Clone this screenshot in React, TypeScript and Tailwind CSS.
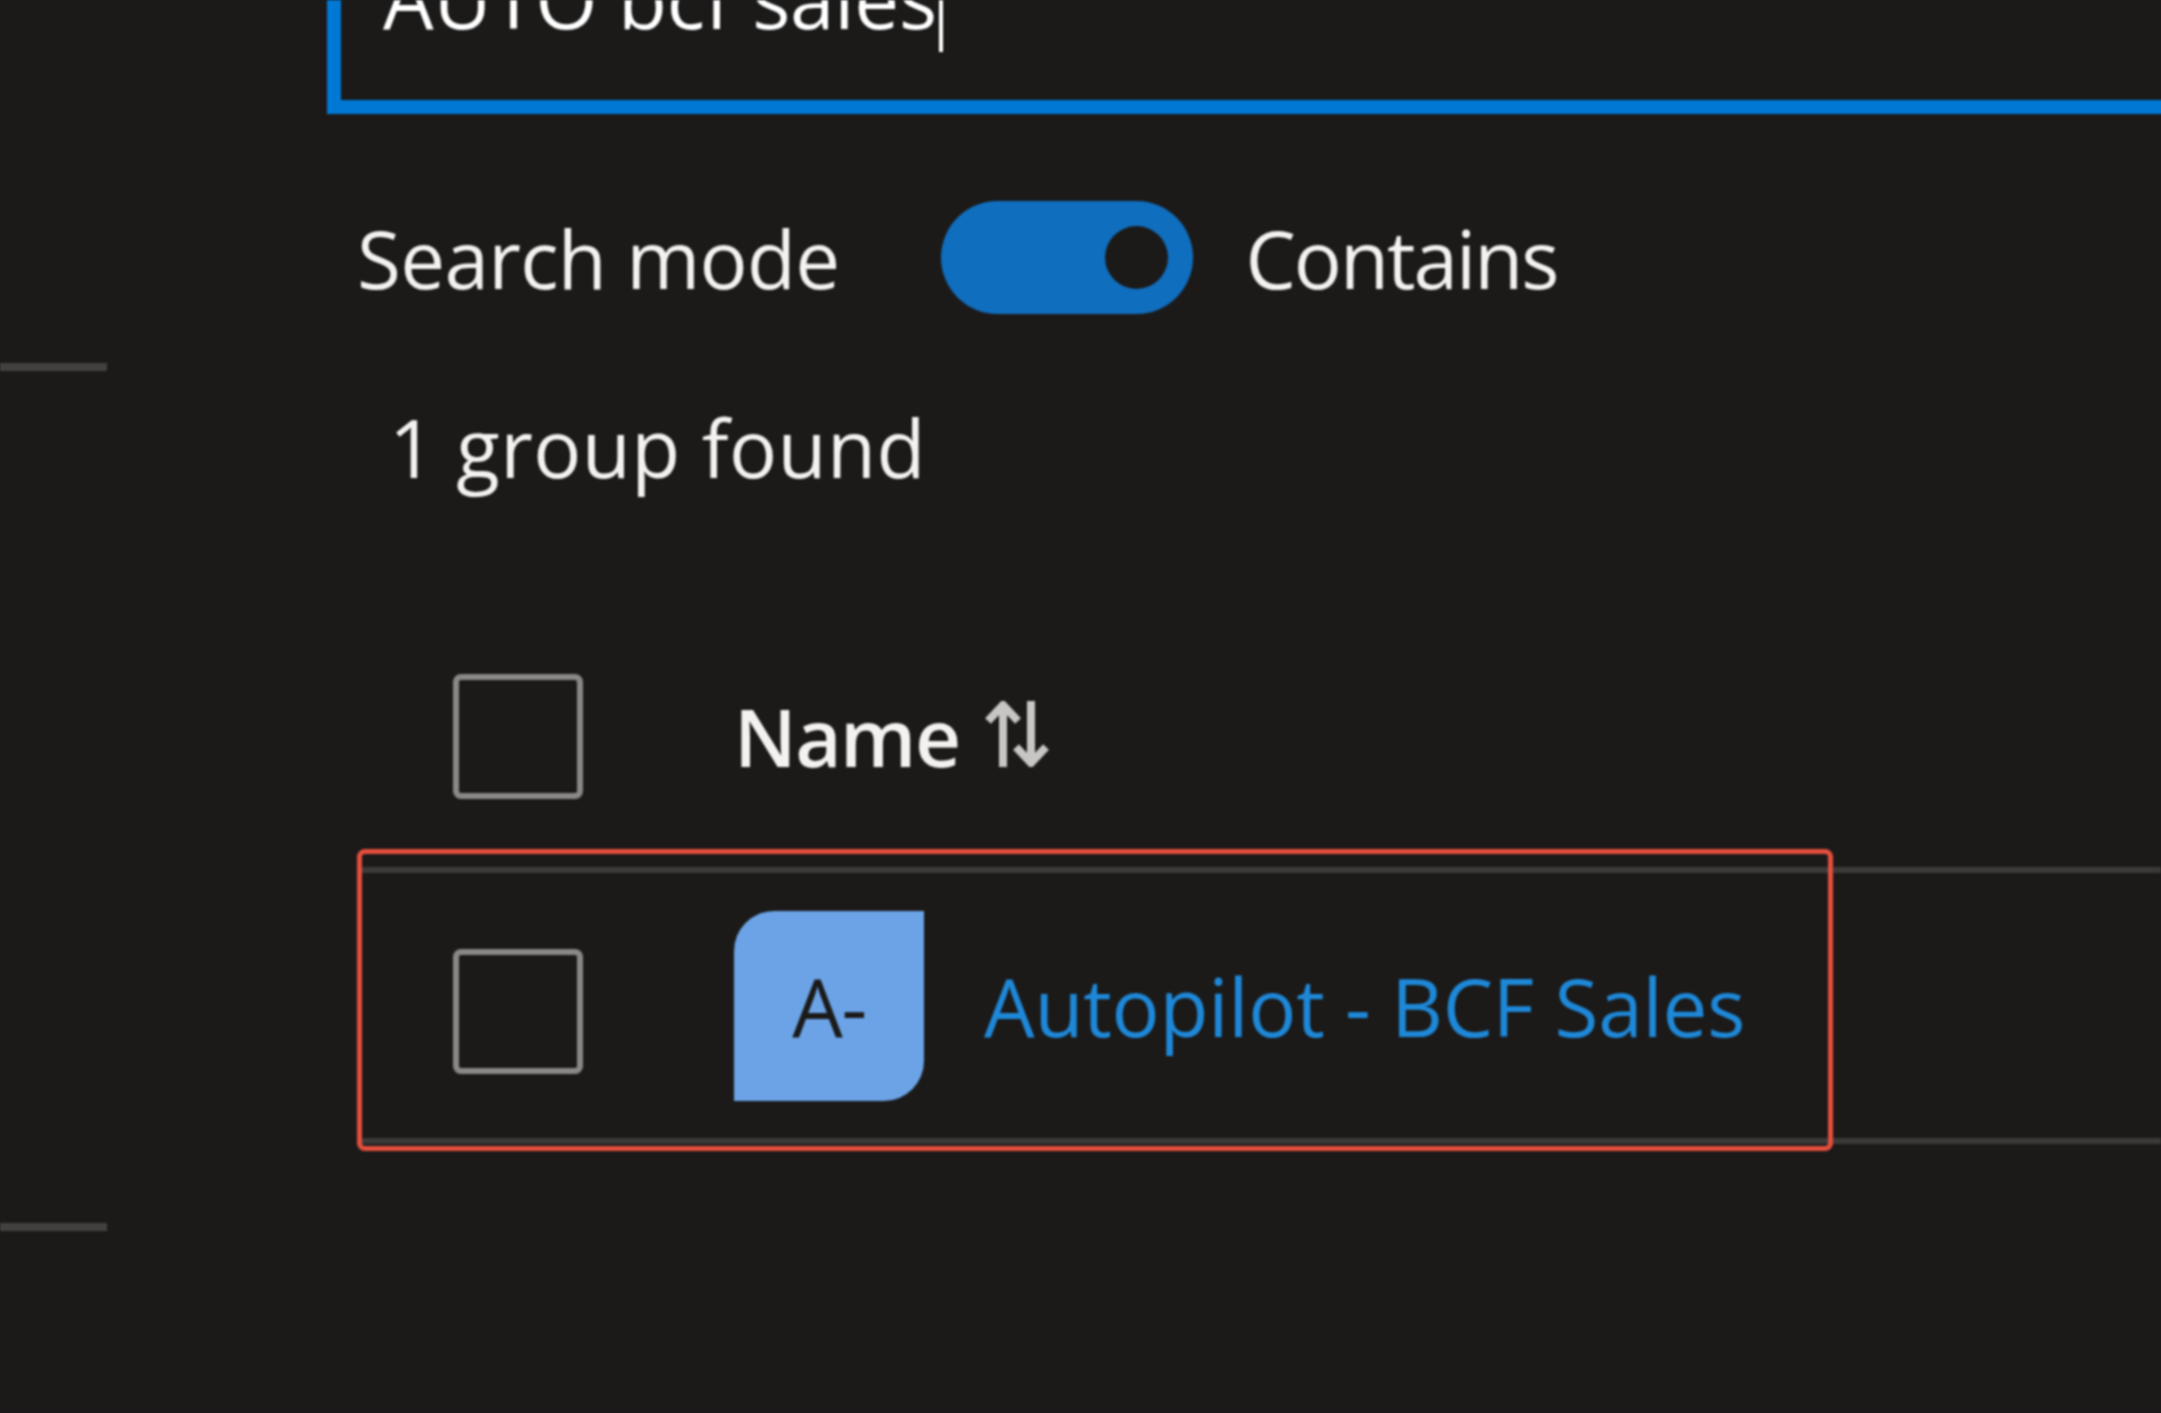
import React from 'react';

function Checkbox({ className = '' }: { className?: string }) {
    return (
        <div className={`h-[125px] w-[130px] shrink-0 rounded-[8px] border-[6px] border-[#8a8886] ${className}`} />
    );
}

function SortIcon() {
    return (
        <svg viewBox="0 0 64 66" className="ml-[26px] h-[66px] w-[64px]" fill="none" stroke="#c8c6c4" strokeWidth="8">
            <path d="M18 66V4M3 20 18 4 33 20" />
            <path d="M46 0V62M31 46 46 62 61 46" />
        </svg>
    );
}

export default function App() {
    return (
        <div className="h-screen w-full overflow-hidden bg-[#1b1a19]">
            <div
                className="flex h-full w-full bg-[#1b1a19] text-[80px] text-[#f3f2f1] blur-[1px]"
                style={{ fontFamily: '"Open Sans", "Noto Sans", sans-serif' }}
            >
                {/* left nav leftovers */}
                <div className="mr-[220px] w-[107px] shrink-0 pt-[363px]">
                    <div className="h-[8px] bg-[#424140]" />
                    <div className="mt-[852px] h-[8px] bg-[#424140]" />
                </div>

                <div className="min-w-0 flex-1">
                    <div className="-mr-[20px] flex h-[114px] items-end overflow-hidden border-b-[14px] border-l-[14px] border-[#0078d4] pl-[42px]">
                        <div className="mb-[80px] flex h-[110px] items-end leading-none">
                            <span className="mb-[-18px] tracking-[-0.2px] text-white">AUTO bcf sales</span>
                            <span className="mb-[-32px] ml-[2px] h-[100px] w-[4px] bg-white" />
                        </div>
                    </div>

                    <div className="mt-[87px] flex h-[113px] items-center pl-[30px]">
                        <span className="tracking-[-0.7px]">Search mode</span>
                        <div className="ml-[102px] flex h-[113px] w-[252px] items-center justify-end rounded-full bg-[#106ebe] pr-[25px]">
                            <div className="h-[63px] w-[63px] rounded-full bg-[#1b1a19]" />
                        </div>
                        <span className="ml-[52px] tracking-[-2px]">Contains</span>
                    </div>

                    <div className="mt-[83px] pl-[62px] leading-[100px] tracking-[0.4px]">1 group found</div>

                    <div className="relative mt-[108px] ml-[30px]">
                        <div className="flex h-[262px] items-center pl-[96px]">
                            <Checkbox />
                            <div className="ml-[151px] flex items-baseline">
                                <span className="font-semibold tracking-[-1.5px] text-[#f3f2f1]">Name</span>
                                <SortIcon />
                            </div>
                        </div>
                        <div className="flex h-[277px] items-center border-y-[6px] border-[#3b3a39] pl-[96px]">
                            <Checkbox className="mt-[12px]" />
                            <div className="ml-[151px] flex h-[190px] w-[190px] shrink-0 items-center justify-center rounded-tl-[40px] rounded-br-[40px] bg-[#6ba3e6] tracking-[-1.5px] text-[#1b1a19]">
                                A-
                            </div>
                            <span className="ml-[60px] tracking-[-0.2px] text-[#1e88d8]">Autopilot - BCF Sales</span>
                        </div>
                        {/* annotation box around the result */}
                        <div className="absolute top-[244px] left-0 h-[302px] w-[1476px] rounded-[8px] border-[5px] border-[#e34f3c]" />
                    </div>
                </div>
            </div>
        </div>
    );
}
